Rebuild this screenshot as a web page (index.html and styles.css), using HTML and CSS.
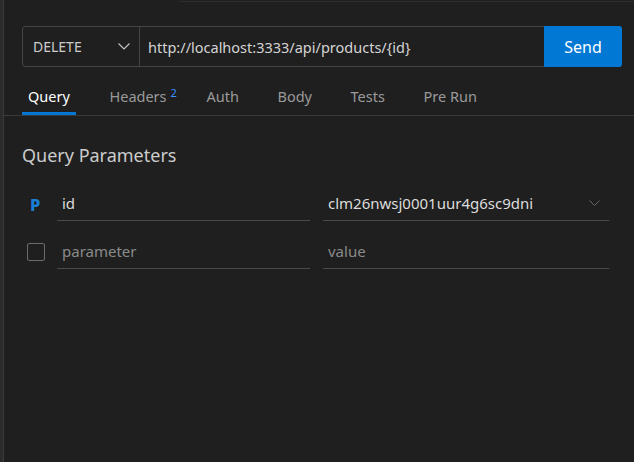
FILE: index.html
```html
<!DOCTYPE html>
<html>
<head>
<meta charset="utf-8">
<link rel="stylesheet" href="styles.css">
</head>
<body>
<div class="app">
  <div class="top-line"></div>
  <div class="request-bar">
    <div class="method">
      <span class="method-text">DELETE</span>
      <svg class="chev" width="12" height="7" viewBox="0 0 12 7"><path d="M0.5 0.5 L6 6 L11.5 0.5" fill="none" stroke="#c8c8c8" stroke-width="1.1"/></svg>
    </div>
    <div class="url">http://localhost:3333/api/products/{id}</div>
    <button class="send">Send</button>
  </div>
  <div class="tabs">
    <div class="tab active">Query</div>
    <div class="tab">Headers<sup class="badge">2</sup></div>
    <div class="tab">Auth</div>
    <div class="tab">Body</div>
    <div class="tab">Tests</div>
    <div class="tab">Pre Run</div>
  </div>
  <div class="content">
    <h2 class="section-title">Query Parameters</h2>
    <div class="param-row">
      <div class="lead"><span class="path-p">P</span></div>
      <div class="field key">id</div>
      <div class="field value">
        <span>clm26nwsj0001uur4g6sc9dni</span>
        <svg class="chev2" width="11" height="6" viewBox="0 0 11 6"><path d="M0.5 0.5 L5.5 5.5 L10.5 0.5" fill="none" stroke="#6a6a6a" stroke-width="1"/></svg>
      </div>
    </div>
    <div class="param-row">
      <div class="lead"><span class="checkbox"></span></div>
      <div class="field key placeholder">parameter</div>
      <div class="field value placeholder">value</div>
    </div>
  </div>
</div>
</body>
</html>
```
FILE: styles.css
```css
* { box-sizing: border-box; }
html, body { margin: 0; height: 100%; }
body {
  background: #1f1f1f;
  font-family: "Noto Sans", "Open Sans", sans-serif;
  color: #cccccc;
  overflow: hidden;
}
.app {
  position: relative;
  height: 100%;
  padding-top: 26px;
  border-left: 3px solid #2b2b2b;
  box-shadow: inset 1px 0 0 #3a3a3a;
}
.top-line {
  position: absolute;
  top: 1px;
  left: 176px;
  right: 0;
  height: 1px;
  background: #2c2c2c;
}
.request-bar {
  display: flex;
  height: 41px;
  margin: 0 12px 0 19px;
  border: 1px solid #444444;
  border-radius: 3px;
}
.method {
  width: 117px;
  display: flex;
  align-items: center;
  justify-content: space-between;
  padding: 0 9px 0 10px;
  border-right: 1px solid #444444;
  font-size: 14px;
  color: #cccccc;
}
.url {
  flex: 1;
  display: flex;
  align-items: center;
  padding-left: 8px;
  font-size: 14.5px;
  color: #d4d4d4;
}
.send {
  width: 78px;
  margin: -1px -1px -1px 0;
  border: none;
  border-radius: 0 3px 3px 0;
  background: #0078d4;
  color: #ffffff;
  font-family: inherit;
  font-size: 16px;
}
.tabs {
  display: flex;
  gap: 26.6px;
  padding-left: 19px;
  border-bottom: 1px solid #3a3a3a;
}
.tab {
  padding: 17px 6px 4px;
  line-height: 24px;
  font-size: 14.5px;
  color: #9a9a9a;
  border-bottom: 3px solid transparent;
}
.tab:nth-child(2) { margin-left: 1px; }
.tab.active {
  color: #ffffff;
  border-bottom-color: #0078d4;
}
.badge {
  font-size: 11px;
  color: #3794ff;
  margin-left: 4px;
  margin-right: -9px;
  vertical-align: 5px;
  line-height: 0;
}
.content {
  padding: 27px 25px 0 19px;
}
.section-title {
  margin: 0 0 20px;
  font-weight: normal;
  font-size: 18px;
  line-height: 24px;
  color: #cccccc;
}
.param-row {
  display: flex;
  margin-bottom: 14px;
}
.lead {
  width: 35px;
  display: flex;
  align-items: center;
}
.path-p {
  margin-left: 8px;
  color: #1a7fd6;
  font-weight: 800;
  font-size: 16.5px;
}
.checkbox {
  display: block;
  width: 18px;
  height: 18px;
  margin-left: 5px;
  border: 1px solid #6b6b6b;
  border-radius: 2px;
}
.field {
  height: 34px;
  display: flex;
  align-items: center;
  padding-left: 5px;
  padding-bottom: 1px;
  border-bottom: 1px solid #4a4a4a;
  font-size: 15px;
  color: #dcdcdc;
}
.key { width: 253px; }
.value {
  width: 286px;
  margin-left: 13px;
  justify-content: space-between;
  padding-right: 9px;
}
.placeholder { color: #8a8a8a; }
```
